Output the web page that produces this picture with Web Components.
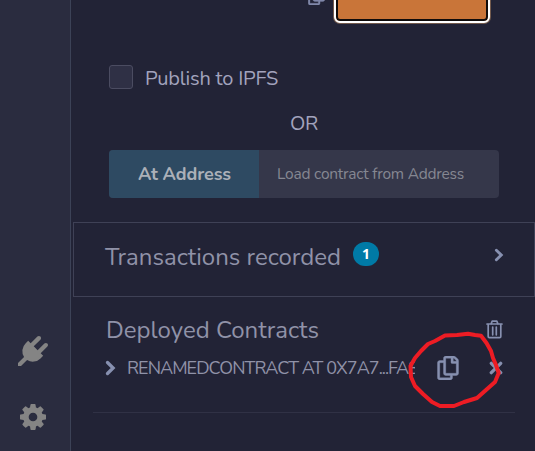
<!DOCTYPE html>
<html lang="en">
<head>
<meta charset="utf-8">
<title>Deploy and run</title>
<style>
html,body{margin:0;height:100%;overflow:hidden;background:#222336}
</style>
</head>
<body>
<deploy-app></deploy-app>
<script>
const define = (name, html, setup) => {
  const t = document.createElement('template');
  t.innerHTML = html;
  customElements.define(name, class extends HTMLElement {
    connectedCallback() {
      if (this.shadowRoot) return;
      this.attachShadow({mode: 'open'}).append(t.content.cloneNode(true));
      if (setup) setup(this, this.shadowRoot);
    }
  });
};

// A single line of text whose tracking is adjusted to reach the width given in "w".
define('fit-text', `<style>:host{display:block;white-space:nowrap;flex:none}span{display:inline-block}</style><span><slot></slot></span>`, (el, root) => {
  const s = root.querySelector('span');
  const n = el.textContent.length;
  const w = +el.getAttribute('w');
  el.style.width = w + 'px';
  s.style.letterSpacing = (w - s.getBoundingClientRect().width) / n + 'px';
});

const icons = {
  plug: ['0 0 1792 1792', '<path d="M1755 453q37 38 37 90.5t-37 90.5l-401 400 150 150-160 160q-163 163-389.5 186.5t-411.5-100.5l-362 362h-181v-181l362-362q-124-185-100.5-411.5t186.5-389.5l160-160 150 150 400-401q38-37 91-37t90 37 37 90.5-37 90.5l-400 401 234 234 401-400q38-37 91-37t90 37z"/>'],
  cog: ['128 128 1536 1536', '<path d="M1152 896q0-106-75-181t-181-75-181 75-75 181 75 181 181 75 181-75 75-181zm512-109v222q0 12-8 23t-20 13l-185 28q-19 54-39 91 35 50 107 138 10 12 10 25t-9 23q-27 37-99 108t-94 71q-12 0-26-9l-138-108q-44 23-91 38-16 136-29 186-7 28-36 28h-222q-14 0-24.500-8.500t-11.500-21.500l-28-184q-49-16-90-37l-141 107q-10 9-25 9-14 0-25-11-126-114-165-168-7-10-7-23 0-12 8-23 15-21 51-66.500t54-70.500q-27-50-41-99l-183-27q-13-2-21-12.500t-8-23.500v-222q0-12 8-23t19-13l186-28q14-46 39-92-40-57-107-138-10-12-10-24 0-10 9-23 26-36 98.500-107.500t94.500-71.500q13 0 26 10l138 107q44-23 91-38 16-136 29-186 7-28 36-28h222q14 0 24.500 8.500t11.500 21.500l28 184q49 16 90 37l142-107q9-9 24-9 13 0 25 10 129 119 165 170 7 8 7 22 0 12-8 23-15 21-51 66.500t-54 70.500q26 50 41 98l183 28q13 2 21 12.500t8 23.500z"/>'],
  copy: ['0 0 448 512', '<path d="M433.941 65.941l-51.882-51.882A48 48 0 0 0 348.118 0H176c-26.510 0-48 21.490-48 48v48H48c-26.510 0-48 21.490-48 48v320c0 26.510 21.490 48 48 48h224c26.510 0 48-21.490 48-48v-48h80c26.510 0 48-21.490 48-48V99.882a48 48 0 0 0-14.059-33.941zM266 464H54a6 6 0 0 1-6-6V150a6 6 0 0 1 6-6h74v224c0 26.510 21.490 48 48 48h96v42a6 6 0 0 1-6 6zm128-96H182a6 6 0 0 1-6-6V54a6 6 0 0 1 6-6h106v88c0 13.255 10.745 24 24 24h88v202a6 6 0 0 1-6 6zm6-256h-64V48h9.632c1.591 0 3.117.632 4.243 1.757l48.368 48.368a6 6 0 0 1 1.757 4.243V112z" stroke="currentColor" stroke-width="8"/>'],
  trash: ['0 0 17 19', '<path d="M1 4H16M5 4L6.200 1.200H10.800L12 4M2.200 4V16.500Q2.200 17.700 3.400 17.700H13.600Q14.800 17.700 14.800 16.500V4M6.700 7V14.800M10.300 7V14.800" fill="none" stroke="currentColor" stroke-width="1.700" stroke-linecap="round" stroke-linejoin="round"/>'],
  chevron: ['0 0 10 16', '<path d="M2 2.500L7.600 8L2 13.500" fill="none" stroke="currentColor" stroke-width="3.300" stroke-linecap="round"/>'],
  cross: ['0 0 14 14', '<path d="M2.300 2.300L11.700 11.700M11.700 2.300L2.300 11.700" stroke="currentColor" stroke-width="3.300" stroke-linecap="round"/>']
};
define('ui-icon', `<style>:host{display:block;flex:none}svg{display:block;width:100%;height:100%;fill:currentColor}</style><svg></svg>`, (el, root) => {
  const [box, body] = icons[el.getAttribute('name')];
  const svg = root.querySelector('svg');
  svg.setAttribute('viewBox', box);
  svg.innerHTML = body;
});

define('side-bar', `<style>
:host{display:flex;flex-direction:column;justify-content:flex-end;gap:38px;box-sizing:border-box;width:71px;height:100%;padding:0 0 21px 18px;background:#2a2c3f;border-right:1px solid #3c4257;color:#848484}
.p{width:30px;height:30px}.c{width:26px;height:26px;margin-left:2px}
</style><ui-icon class="p" name="plug"></ui-icon><ui-icon class="c" name="cog"></ui-icon>`);

define('deploy-form', `<style>
:host{display:block;height:222px;box-sizing:border-box;overflow:hidden;color:#a2a3bd;font-size:20px;line-height:24px}
.top{display:flex;height:65px;padding-left:237px;gap:9px}
.top ui-icon{width:17px;height:19px;margin-top:-14px;color:#8088a9}
.btn{box-sizing:border-box;width:156px;height:33px;margin-top:-10px;border:2px solid #fff;border-radius:6px;background:#c97539;box-shadow:inset 0 0 0 2px #100c0b,0 0 0 1px #735a4d}
.check{display:flex;align-items:center;gap:12px;height:24px;padding-left:38px}
.check fit-text{padding-top:3px}
.box{box-sizing:border-box;width:24px;height:24px;border:1px solid #4b4c61;border-radius:3px;background:#2f3045}
.or{padding:23px 0 14px 219px}
.row{display:flex;width:390px;height:48px;margin-left:38px;border-radius:4px;overflow:hidden;background:#35374a}
.at{display:flex;align-items:center;justify-content:center;width:150px;background:#2e4a62;color:#abb0b8;font-weight:700;font-size:18px}
.at fit-text{padding-left:1px}
.in{display:flex;align-items:center;padding-left:18px;color:#858792;font-size:15.500px}
</style>
<div class="top"><ui-icon name="copy"></ui-icon><div class="btn"></div></div>
<div class="check"><div class="box"></div><fit-text w="133">Publish to IPFS</fit-text></div>
<div class="or"><fit-text w="28">OR</fit-text></div>
<div class="row"><div class="at"><fit-text w="93">At Address</fit-text></div><div class="in"><fit-text w="187">Load contract from Address</fit-text></div></div>`);

define('transaction-card', `<style>
:host{display:flex;align-items:flex-start;box-sizing:border-box;height:75px;margin-left:2px;border:1px solid #3f4156;padding:18px 30px 0 31px;color:#9092a8;font-size:24px;line-height:32px}
.badge{display:flex;align-items:center;justify-content:center;width:26px;height:24px;margin:1px 0 0 12px;border-radius:12px;background:#007aa6;color:#fff;font:700 14px/24px "Noto Sans",sans-serif}
ui-icon{width:10px;height:14px;margin:7px 0 0 auto;color:#8790b0}
</style><fit-text w="236">Transactions recorded</fit-text><span class="badge">1</span><ui-icon name="chevron"></ui-icon>`);

define('deployed-contracts', `<style>
:host{display:block;padding:17px 20px 0 23px;color:#9092a8}
.head{display:flex;align-items:center;height:32px;padding:0 12px;font-size:24px;line-height:32px}
.head ui-icon{width:17px;height:19px;margin:-1px 0 0 auto;color:#8790b0}
.item{display:flex;align-items:center;height:44px;padding-left:11px;border-radius:4px;font-size:18px;line-height:24px;color:#9092a8}
.item ui-icon{color:#8790b0}
.chev{width:11px;height:16px}
.name{width:288px;margin-left:11px;overflow:hidden}
.copy{width:22px;height:24px;margin-left:22px}
.x{width:14px;height:14px;margin-left:30px}
.line{height:23px;margin-left:-1px;border-bottom:1px solid #303145;box-sizing:border-box}
</style>
<div class="head"><fit-text w="213">Deployed Contracts</fit-text><ui-icon name="trash"></ui-icon></div>
<div class="item"><ui-icon class="chev" name="chevron"></ui-icon><div class="name"><fit-text w="291">RENAMEDCONTRACT AT 0X7A7...FA8</fit-text></div><ui-icon class="copy" name="copy"></ui-icon><ui-icon class="x" name="cross"></ui-icon></div>
<div class="line"></div>`);

define('pen-circle', `<style>:host{position:absolute;left:404px;top:328px;width:100px;height:84px;pointer-events:none}svg{display:block}</style>
<svg width="100" height="84" viewBox="404 328 100 84"><path d="M410.500 366L415 358L421 351L428 344L435 341L445 335.500L457 335L468 333.700L475 335L481 335.700L486.500 343L491 351L493 358L496 365L498.700 373L495 382L486 390L477 398L464 402L454 406H440L432 402L423 394L415 386L411 377Z" fill="none" stroke="#ed1c24" stroke-width="4" stroke-linejoin="round"/></svg>`);

define('deploy-app', `<style>
:host{display:grid;grid-template-columns:71px 464px;position:relative;width:535px;height:451px;overflow:hidden;background:#222336;font-family:"Nunito","Lato","Open Sans",sans-serif}
</style>
<side-bar></side-bar>
<main><deploy-form></deploy-form><transaction-card></transaction-card><deployed-contracts></deployed-contracts></main>
<pen-circle></pen-circle>`);
</script>
</body>
</html>
